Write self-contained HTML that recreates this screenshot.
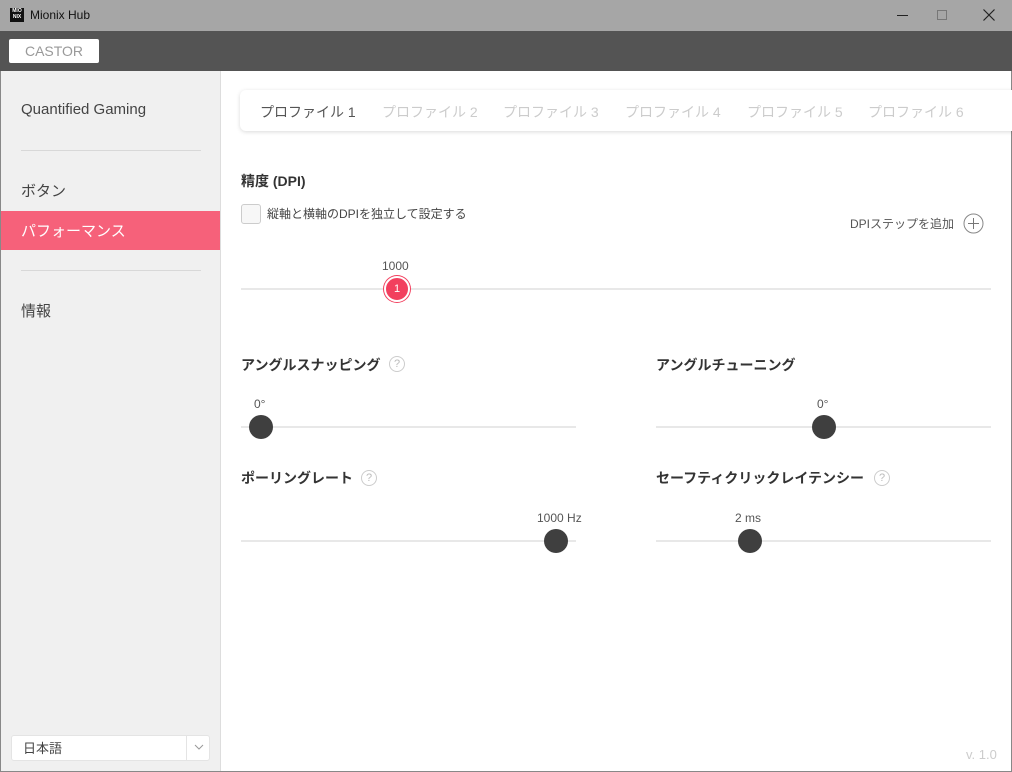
<!DOCTYPE html><html><head><meta charset="utf-8"><style>
*{margin:0;padding:0;box-sizing:border-box}
body{width:1012px;height:772px;position:relative;overflow:hidden;background:#fff;font-family:"Liberation Sans","Noto Sans CJK JP",sans-serif;color:#333}
.a{position:absolute}
.t{font-size:13px;white-space:nowrap}
.h{font-size:14px;font-weight:bold;color:#333}
.line{height:2px;background:#e8e8e8}
.knob{width:24px;height:24px;border-radius:50%;background:#3f3f3f}
.q{width:16px;height:16px;border:1px solid #ccc;border-radius:50%;font-size:11px;color:#bbb;text-align:center;line-height:14px}
.v{font-size:12px;color:#555}
.tab{font-size:14px;top:102px}
</style></head><body>
<div class="a" style="left:0;top:0;width:1012px;height:31px;background:#a6a6a6"></div>
<div class="a" style="left:10px;top:8px;width:14px;height:14px;background:#111;color:#fff;font-size:5px;line-height:6px;text-align:center;font-weight:bold">MIO<br>NIX</div>
<div class="a t" style="left:30px;top:8px;font-size:12px;color:#111">Mionix Hub</div>
<div class="a" style="left:897px;top:15px;width:11px;height:1px;background:#222"></div>
<div class="a" style="left:937px;top:10px;width:10px;height:10px;border:1px solid #777"></div>
<svg class="a" style="left:983px;top:9px" width="12" height="12"><path d="M0.5 0.5L11.5 11.5M11.5 0.5L0.5 11.5" stroke="#222" stroke-width="1.2"/></svg>
<div class="a" style="left:0;top:31px;width:1012px;height:40px;background:#545454"></div>
<div class="a" style="left:9px;top:39px;width:90px;height:24px;background:#fff;border-radius:2px;color:#999;font-size:14px;text-align:center;line-height:24px">CASTOR</div>
<div class="a" style="left:0;top:71px;width:221px;height:701px;background:#f0f0f0;border-right:1px solid #ddd"></div>
<div class="a" style="left:0;top:71px;width:1px;height:701px;background:#888"></div>
<div class="a" style="left:1011px;top:71px;width:1px;height:701px;background:#888"></div>
<div class="a" style="left:0;top:771px;width:1012px;height:1px;background:#888"></div>
<div class="a t" style="left:21px;top:101px;font-size:15px;color:#444">Quantified Gaming</div>
<div class="a" style="left:21px;top:150px;width:180px;height:1px;background:#d8d8d8"></div>
<div class="a t" style="left:21px;top:180px;font-size:15px;color:#444">ボタン</div>
<div class="a" style="left:1px;top:211px;width:219px;height:39px;background:#f6617a"></div>
<div class="a t" style="left:21px;top:220px;font-size:15px;color:#fff">パフォーマンス</div>
<div class="a" style="left:21px;top:270px;width:180px;height:1px;background:#d8d8d8"></div>
<div class="a t" style="left:21px;top:300px;font-size:15px;color:#444">情報</div>
<div class="a" style="left:11px;top:735px;width:199px;height:26px;background:#fff;border:1px solid #e4e4e4;border-radius:3px"></div>
<div class="a" style="left:186px;top:736px;width:1px;height:24px;background:#e4e4e4"></div>
<div class="a t" style="left:23px;top:738px;color:#444">日本語</div>
<svg class="a" style="left:194px;top:744px" width="10" height="6"><path d="M1 1L5 5L9 1" fill="none" stroke="#999" stroke-width="1"/></svg>
<div class="a" style="left:240px;top:90px;width:780px;height:41px;background:#fff;border-radius:6px;box-shadow:0 1px 4px rgba(0,0,0,.15)"></div>
<div class="a t tab" style="left:260px;color:#555">プロファイル 1</div>
<div class="a t tab" style="left:382px;color:#ccc">プロファイル 2</div>
<div class="a t tab" style="left:503px;color:#ccc">プロファイル 3</div>
<div class="a t tab" style="left:625px;color:#ccc">プロファイル 4</div>
<div class="a t tab" style="left:747px;color:#ccc">プロファイル 5</div>
<div class="a t tab" style="left:868px;color:#ccc">プロファイル 6</div>
<div class="a h" style="left:241px;top:171px">精度 (DPI)</div>
<div class="a" style="left:241px;top:204px;width:20px;height:20px;border:1px solid #ccc;border-radius:3px;background:#f7f7f7"></div>
<div class="a t" style="left:267px;top:205px;font-size:12px;color:#444">縦軸と横軸のDPIを独立して設定する</div>
<div class="a t" style="left:850px;top:215px;font-size:12px;color:#555">DPIステップを追加</div>
<svg class="a" style="left:963px;top:213px" width="21" height="21"><circle cx="10.5" cy="10.5" r="9.5" fill="none" stroke="#888"/><path d="M10.5 5V16M5 10.5H16" stroke="#777"/></svg>
<div class="a line" style="left:241px;top:288px;width:750px"></div>
<div class="a v" style="left:382px;top:259px">1000</div>
<div class="a" style="left:384px;top:276px;width:26px;height:26px;border-radius:50%;background:#f23f5e;border:2px solid #fff;box-shadow:0 0 0 1px #f23f5e;color:#fff;font-size:11px;text-align:center;line-height:22px">1</div>
<div class="a h" style="left:241px;top:355px">アングルスナッピング</div>
<div class="a q" style="left:389px;top:356px">?</div>
<div class="a v" style="left:254px;top:397px">0°</div>
<div class="a line" style="left:241px;top:426px;width:335px"></div>
<div class="a knob" style="left:249px;top:415px"></div>
<div class="a h" style="left:656px;top:355px">アングルチューニング</div>
<div class="a v" style="left:817px;top:397px">0°</div>
<div class="a line" style="left:656px;top:426px;width:335px"></div>
<div class="a knob" style="left:812px;top:415px"></div>
<div class="a h" style="left:241px;top:468px">ポーリングレート</div>
<div class="a q" style="left:361px;top:470px">?</div>
<div class="a v" style="left:537px;top:511px">1000 Hz</div>
<div class="a line" style="left:241px;top:540px;width:335px"></div>
<div class="a knob" style="left:544px;top:529px"></div>
<div class="a h" style="left:656px;top:468px">セーフティクリックレイテンシー</div>
<div class="a q" style="left:874px;top:470px">?</div>
<div class="a v" style="left:735px;top:511px">2 ms</div>
<div class="a line" style="left:656px;top:540px;width:335px"></div>
<div class="a knob" style="left:738px;top:529px"></div>
<div class="a t" style="left:966px;top:747px;font-size:13px;color:#ccc">v. 1.0</div>
</body></html>
